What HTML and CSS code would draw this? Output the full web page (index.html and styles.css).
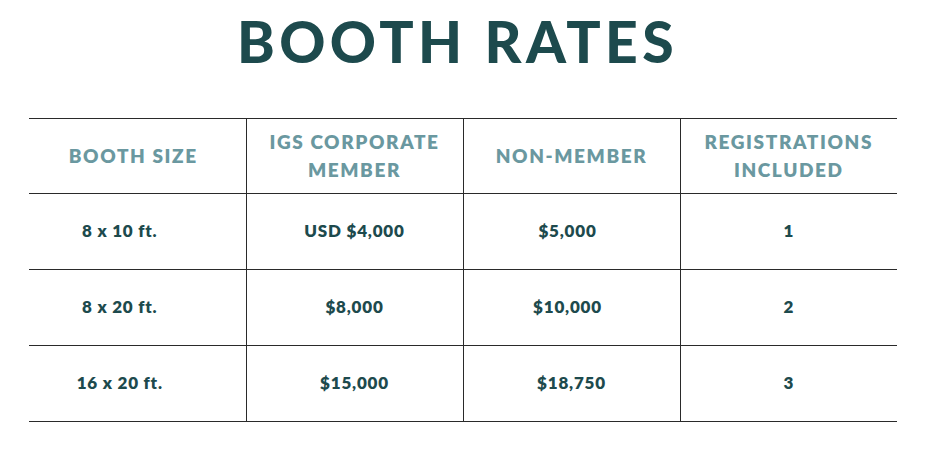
FILE: index.html
```html
<!DOCTYPE html>
<html lang="en">
<head>
<meta charset="utf-8">
<title>Booth Rates</title>
<link rel="stylesheet" href="styles.css">
</head>
<body>
<main class="page">
  <h1 class="title">BOOTH RATES</h1>
  <table class="rates">
    <thead>
      <tr>
        <th class="size-head">BOOTH SIZE</th>
        <th>IGS CORPORATE<br>MEMBER</th>
        <th>NON-MEMBER</th>
        <th>REGISTRATIONS<br>INCLUDED</th>
      </tr>
    </thead>
    <tbody>
      <tr><td class="size">8 x 10 ft.</td><td>USD $4,000</td><td class="non">$5,000</td><td>1</td></tr>
      <tr><td class="size">8 x 20 ft.</td><td>$8,000</td><td class="non">$10,000</td><td>2</td></tr>
      <tr><td class="size">16 x 20 ft.</td><td>$15,000</td><td>$18,750</td><td>3</td></tr>
    </tbody>
  </table>
</main>
</body>
</html>
```

FILE: styles.css
```css
html, body {
  margin: 0;
  padding: 0;
  background: #ffffff;
}

.page {
  width: 935px;
  height: 449px;
  font-family: "Lato", "Open Sans", sans-serif;
  color: #1d4a4d;
}

.title {
  margin: 0;
  padding-top: 9px;
  padding-right: 20px;
  height: 109px;
  box-sizing: border-box;
  text-align: center;
  font-size: 57px;
  line-height: 64px;
  font-weight: 900;
  letter-spacing: 4.4px;
  color: #1d4a4d;
}

.rates {
  margin-top: 9px;
  margin-left: 29px;
  width: 868px;
  border-collapse: collapse;
  table-layout: fixed;
}

.rates th,
.rates td {
  border-top: 1px solid #2a2a2a;
  border-bottom: 1px solid #2a2a2a;
  border-left: 1px solid #2a2a2a;
  text-align: center;
  vertical-align: middle;
  padding: 0;
}

.rates th:first-child,
.rates td:first-child {
  border-left: none;
}

.rates th {
  height: 74px;
  font-size: 19px;
  line-height: 28px;
  font-weight: 800;
  letter-spacing: 1.6px;
  color: #6a98a0;
}

.rates th.size-head {
  padding-right: 8px;
}

.rates td {
  height: 73px;
  font-size: 17px;
  font-weight: 800;
  color: #1d4a4d;
  letter-spacing: 0.8px;
  padding-bottom: 2px;
}

.rates td.size {
  padding-right: 35px;
}

.rates td.non {
  padding-right: 8px;
}
```
